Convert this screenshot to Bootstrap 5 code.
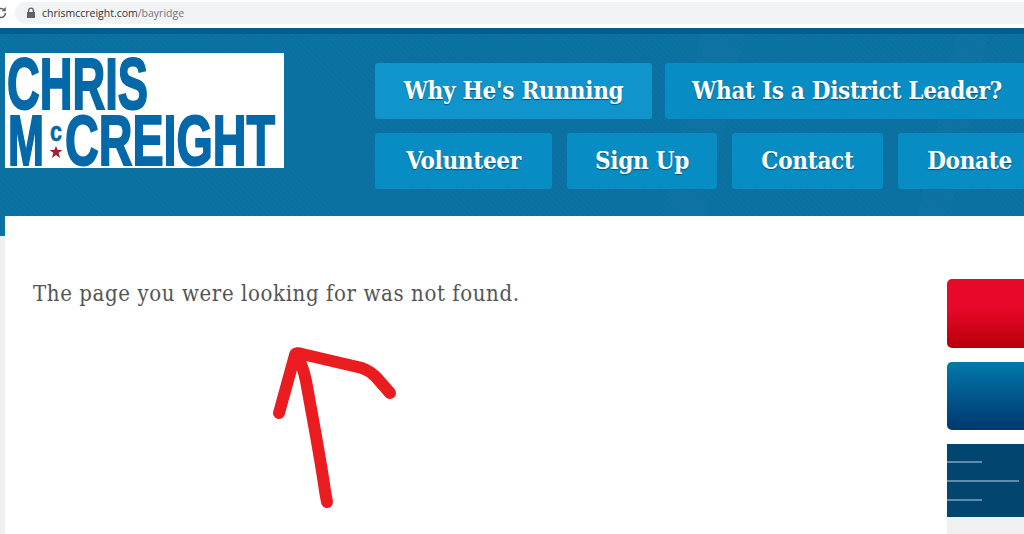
<!DOCTYPE html>
<html lang="en">
<head>
  <meta charset="UTF-8">
  <title>Chris McCreight</title>
  <link href="https://cdn.jsdelivr.net/npm/bootstrap@5.3.3/dist/css/bootstrap.min.css" rel="stylesheet">
  <style>
    html, body { height: 534px; overflow: hidden; }
    body { background: #f0f0f0; width: 1024px; }
    .browser-bar { height: 28px; background: #fff; padding: 2px 0 4px 0; }
    .reload-mark { margin: 0 7px 0 -6px; flex: none; }
    .url-box { background: #f1f3f4; border-radius: 11px 0 0 11px; padding-left: 11px; gap: 6px; font: 10.500px "Open Sans", sans-serif; color: #303336; }
    .url-path { color: #70757a; }
    .site-head { height: 188px; border-top: 6px solid #005f8f; background-color: #0b72a3; background-image: linear-gradient(102deg, transparent 66%, rgba(255,255,255,.012) 66% 70%, transparent 70% 90%, rgba(255,255,255,.012) 90% 93%, transparent 93%), repeating-linear-gradient(45deg, rgba(0,0,0,.02) 0 2px, transparent 2px 4px); }
    .logo-box { width: 279px; height: 115px; margin: 19px 0 0 5px; background: #fff; flex: none; }
    .logo-box svg { display: block; }
    .logo-text { font-family: "Liberation Sans", sans-serif; font-weight: 700; fill: #0568a8; stroke: #0568a8; stroke-width: 2px; }
    .logo-small { stroke-width: .6px; }
    .main-nav { margin: 29px 0 0 91px; gap: 14px; flex: none; }
    .nav-line { gap: 15px; }
    .nav-line.top-line { gap: 13px; }
    .nav-btn { height: 56px; background: #078cc3; border-radius: 3px; color: #fff; font: 700 24px/55px "DejaVu Serif Condensed", "DejaVu Serif", serif; letter-spacing: -.3px; text-align: center; text-shadow: 0 1px 1px #045377; white-space: nowrap; text-decoration: none; display: block; }
    .nav-btn.is-hover { background: #0f94cc; }
    .w-why { width: 277px; }
    .w-what { width: 364px; }
    .w-vol { width: 177px; }
    .w-sign { width: 150px; }
    .w-contact { width: 151px; }
    .w-donate { width: 143px; }
    .page-area { height: 318px; margin-left: 5px; background: #fff; position: relative; }
    .left-cap { position: absolute; left: -5px; top: 0; width: 5px; height: 20px; background: #0b72a3; }
    .main-col { width: 942px; padding: 65px 0 0 28px; }
    .miss-text { font: 22px/26px "DejaVu Serif Condensed", "DejaVu Serif", serif; letter-spacing: .6px; color: #555; margin: 0; }
    .arrow-mark { position: absolute; left: 265px; top: 120px; }
    .side-col { width: 77px; padding-top: 63px; gap: 14px; flex: none; }
    .side-red { height: 69px; border-radius: 5px 0 0 5px; background: linear-gradient(#e8082a 40%, #b80008); }
    .side-blue { height: 68px; border-radius: 5px 0 0 5px; background: linear-gradient(#0279aa, #00376f); }
    .side-navy { height: 73px; background: #02456f; padding-top: 17px; gap: 17px; }
    .navy-line { height: 2px; background: #5d8dab; width: 35px; }
    .navy-line.wide { width: 72px; }
    .side-rest { flex: 1; background: #f1f1f1; margin-top: -14px; }
  </style>
</head>
<body>
  <div class="browser-bar d-flex">
    <svg class="reload-mark align-self-center" width="14" height="14" viewBox="0 0 14 14"><path d="M11.500 7a4.500 4.500 0 1 1-1.300-3.200" fill="none" stroke="#5f6368" stroke-width="1.600"/><path d="M11.800 1v4.300H7.500z" fill="#5f6368"/></svg>
    <div class="url-box h-100 flex-grow-1 d-flex align-items-center">
      <svg width="10" height="12" viewBox="0 0 10 12"><path d="M2 5V3.500a3 3 0 0 1 6 0V5h1v6H1V5zm1.300 0h3.400V3.500a1.700 1.700 0 0 0-3.400 0z" fill="#5f6368"/></svg>
      <span>chrismccreight.com<span class="url-path">/bayridge</span></span>
    </div>
  </div>

  <header class="site-head d-flex">
    <div class="logo-box">
      <svg width="279" height="115" viewBox="0 0 279 115">
        <text class="logo-text" x="2" y="56" font-size="72" textLength="141" lengthAdjust="spacingAndGlyphs">CHRIS</text>
        <text class="logo-text" x="3" y="112" font-size="70" textLength="36" lengthAdjust="spacingAndGlyphs">M</text>
        <text class="logo-text logo-small" x="45" y="88" font-size="28" textLength="12" lengthAdjust="spacingAndGlyphs">c</text>
        <path d="M51 93l1.700 4h4.800l-3.900 3 1.500 5-4.100-3-4.100 3 1.500-5-3.900-3h4.800z" fill="#a3202e"/>
        <text class="logo-text" x="60" y="112" font-size="70" textLength="210" lengthAdjust="spacingAndGlyphs">CREIGHT</text>
      </svg>
    </div>
    <nav class="main-nav d-flex flex-column">
      <div class="nav-line top-line d-flex">
        <a class="nav-btn is-hover w-why" href="#">Why He's Running</a>
        <a class="nav-btn w-what" href="#">What Is a District Leader?</a>
      </div>
      <div class="nav-line d-flex">
        <a class="nav-btn w-vol" href="#">Volunteer</a>
        <a class="nav-btn w-sign" href="#">Sign Up</a>
        <a class="nav-btn w-contact" href="#">Contact</a>
        <a class="nav-btn w-donate" href="#">Donate</a>
      </div>
    </nav>
  </header>

  <div class="page-area d-flex">
    <div class="left-cap"></div>
    <div class="main-col">
      <p class="miss-text">The page you were looking for was not found.</p>
    </div>
    <svg class="arrow-mark" width="140" height="180" viewBox="0 0 140 180">
      <path d="M9 77 L25 19 Q26 16 32 18 L92 32 Q100 35 106 41 L120 57 M27 20 Q33 30 36 45 L46 100 Q53 140 55 155 L57 166" fill="none" stroke="#ea1c1f" stroke-width="12" stroke-linecap="round" stroke-linejoin="round"/>
    </svg>
    <div class="side-col d-flex flex-column">
      <div class="side-red"></div>
      <div class="side-blue"></div>
      <div class="side-navy d-flex flex-column">
        <div class="navy-line"></div>
        <div class="navy-line wide"></div>
        <div class="navy-line"></div>
      </div>
      <div class="side-rest"></div>
    </div>
  </div>

  <script src="https://cdn.jsdelivr.net/npm/bootstrap@5.3.3/dist/js/bootstrap.bundle.min.js"></script>
</body>
</html>
